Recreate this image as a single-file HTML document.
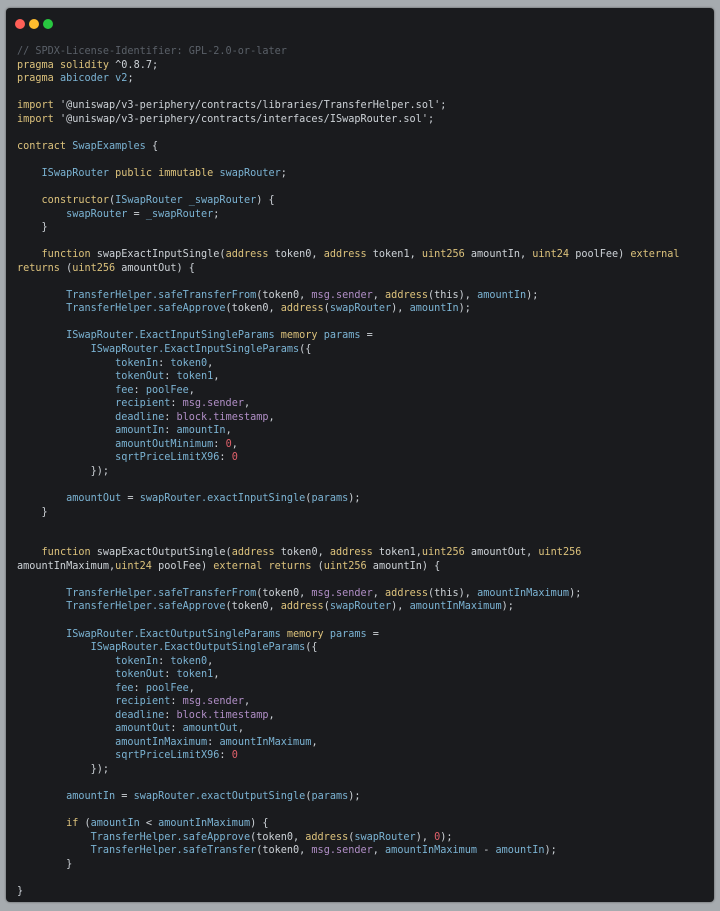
<!DOCTYPE html>
<html><head><meta charset="utf-8"><style>
html,body{margin:0;padding:0;background:#a6abaf;width:720px;height:911px;overflow:hidden}
.win{position:absolute;left:6px;top:8px;width:708px;height:894px;background:#1a1b1e;border-radius:4px;box-shadow:0 0 2px #555}
.dot{position:absolute;top:11px;width:10px;height:10px;border-radius:50%}
pre{position:absolute;left:11px;top:37px;margin:0;font-family:"DejaVu Sans Mono","Liberation Mono",monospace;font-size:10.2px;line-height:13.55px;color:#cdd2d7;white-space:pre}
.k{color:#dcc27c}.b{color:#7bb3d3}.p{color:#b08ec6}.n{color:#e0606a}.c{color:#5a6068}.s{color:#c5cbd1}
</style></head><body>
<div class="win">
<div class="dot" style="left:9px;background:#fe5f57"></div>
<div class="dot" style="left:23px;background:#febc2e"></div>
<div class="dot" style="left:37px;background:#28c840"></div>
<pre><span class="c">// SPDX-License-Identifier: GPL-2.0-or-later</span>
<span class="k">pragma</span> <span class="k">solidity</span> ^0.8.7;
<span class="k">pragma</span> <span class="b">abicoder</span> <span class="b">v2</span>;

<span class="k">import</span> '@uniswap/v3-periphery/contracts/libraries/TransferHelper.sol';
<span class="k">import</span> '@uniswap/v3-periphery/contracts/interfaces/ISwapRouter.sol';

<span class="k">contract</span> <span class="b">SwapExamples</span> {

    <span class="b">ISwapRouter</span> <span class="k">public</span> <span class="k">immutable</span> <span class="b">swapRouter</span>;

    <span class="k">constructor</span>(<span class="b">ISwapRouter</span> <span class="b">_swapRouter</span>) {
        <span class="b">swapRouter</span> = <span class="b">_swapRouter</span>;
    }

    <span class="k">function</span> swapExactInputSingle(<span class="k">address</span> token0, <span class="k">address</span> token1, <span class="k">uint256</span> amountIn, <span class="k">uint24</span> poolFee) <span class="k">external</span>
<span class="k">returns</span> (<span class="k">uint256</span> amountOut) {

        <span class="b">TransferHelper.safeTransferFrom</span>(token0, <span class="p">msg.sender</span>, <span class="k">address</span>(this), <span class="b">amountIn</span>);
        <span class="b">TransferHelper.safeApprove</span>(token0, <span class="k">address</span>(<span class="b">swapRouter</span>), <span class="b">amountIn</span>);

        <span class="b">ISwapRouter.ExactInputSingleParams</span> <span class="k">memory</span> <span class="b">params</span> =
            <span class="b">ISwapRouter.ExactInputSingleParams</span>({
                <span class="b">tokenIn</span>: <span class="b">token0</span>,
                <span class="b">tokenOut</span>: <span class="b">token1</span>,
                <span class="b">fee</span>: <span class="b">poolFee</span>,
                <span class="b">recipient</span>: <span class="p">msg.sender</span>,
                <span class="b">deadline</span>: <span class="p">block.timestamp</span>,
                <span class="b">amountIn</span>: <span class="b">amountIn</span>,
                <span class="b">amountOutMinimum</span>: <span class="n">0</span>,
                <span class="b">sqrtPriceLimitX96</span>: <span class="n">0</span>
            });

        <span class="b">amountOut</span> = <span class="b">swapRouter.exactInputSingle</span>(<span class="b">params</span>);
    }


    <span class="k">function</span> swapExactOutputSingle(<span class="k">address</span> token0, <span class="k">address</span> token1,<span class="k">uint256</span> amountOut, <span class="k">uint256</span>
amountInMaximum,<span class="k">uint24</span> poolFee) <span class="k">external</span> <span class="k">returns</span> (<span class="k">uint256</span> amountIn) {

        <span class="b">TransferHelper.safeTransferFrom</span>(token0, <span class="p">msg.sender</span>, <span class="k">address</span>(this), <span class="b">amountInMaximum</span>);
        <span class="b">TransferHelper.safeApprove</span>(token0, <span class="k">address</span>(<span class="b">swapRouter</span>), <span class="b">amountInMaximum</span>);

        <span class="b">ISwapRouter.ExactOutputSingleParams</span> <span class="k">memory</span> <span class="b">params</span> =
            <span class="b">ISwapRouter.ExactOutputSingleParams</span>({
                <span class="b">tokenIn</span>: <span class="b">token0</span>,
                <span class="b">tokenOut</span>: <span class="b">token1</span>,
                <span class="b">fee</span>: <span class="b">poolFee</span>,
                <span class="b">recipient</span>: <span class="p">msg.sender</span>,
                <span class="b">deadline</span>: <span class="p">block.timestamp</span>,
                <span class="b">amountOut</span>: <span class="b">amountOut</span>,
                <span class="b">amountInMaximum</span>: <span class="b">amountInMaximum</span>,
                <span class="b">sqrtPriceLimitX96</span>: <span class="n">0</span>
            });

        <span class="b">amountIn</span> = <span class="b">swapRouter.exactOutputSingle</span>(<span class="b">params</span>);

        <span class="k">if</span> (<span class="b">amountIn</span> &lt; <span class="b">amountInMaximum</span>) {
            <span class="b">TransferHelper.safeApprove</span>(token0, <span class="k">address</span>(<span class="b">swapRouter</span>), <span class="n">0</span>);
            <span class="b">TransferHelper.safeTransfer</span>(token0, <span class="p">msg.sender</span>, <span class="b">amountInMaximum</span> - <span class="b">amountIn</span>);
        }

}</pre>
</div>
</body></html>
